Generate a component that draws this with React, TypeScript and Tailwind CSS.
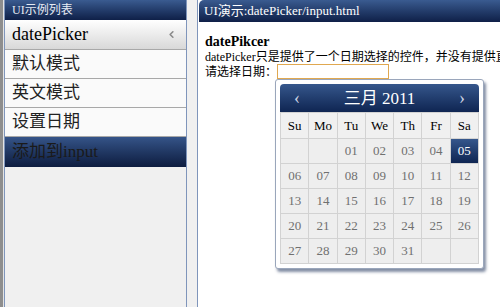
import React from "react"
import { ChevronLeft } from "lucide-react"

const serif = { fontFamily: '"Liberation Serif", "Noto Sans CJK SC", serif' }

const items = ["默认模式", "英文模式", "设置日期"]
const days = ["Su", "Mo", "Tu", "We", "Th", "Fr", "Sa"]
const cells: string[] = [
    "", "", "01", "02", "03", "04", "05",
    "06", "07", "08", "09", "10", "11", "12",
    "13", "14", "15", "16", "17", "18", "19",
    "20", "21", "22", "23", "24", "25", "26",
    "27", "28", "29", "30", "31", "", "",
]

function Calendar() {
    return (
        <div className="absolute left-[76px] top-[57px] w-[209px] rounded-[3px] border border-[#9aa6bb] bg-white p-[4px] shadow-[2px_3px_3px_rgba(30,50,90,0.55)]">
            <div className="flex h-[28px] items-center justify-between rounded-t-[4px] bg-gradient-to-b from-[#36578c] to-[#0f2552] px-[14px] text-white">
                <span className="text-[18px] leading-none text-[#c9d2e2]">‹</span>
                <span className="text-[17px] leading-none">三月 2011</span>
                <span className="text-[18px] leading-none text-[#c9d2e2]">›</span>
            </div>
            <div className="grid grid-cols-7 border-l border-t border-[#d2d2d2]">
                {days.map((d) => (
                    <div key={d} className="flex h-[26px] items-center justify-center border-b border-r border-[#d2d2d2] bg-[#f0f0f0] text-[13px] text-black">
                        {d}
                    </div>
                ))}
                {cells.map((c, i) => (
                    <div
                        key={i}
                        className={
                            c === "05"
                                ? "flex h-[25px] items-center justify-center border-b border-r border-[#d2d2d2] bg-gradient-to-b from-[#36578c] to-[#0f2552] text-[13px] text-white"
                                : "flex h-[25px] items-center justify-center border-b border-r border-[#d2d2d2] bg-[#eeeeee] text-[13px] text-[#707070]"
                        }
                    >
                        {c}
                    </div>
                ))}
            </div>
        </div>
    )
}

export default function App() {
    return (
        <div className="flex h-[307px] w-[500px] overflow-hidden bg-[#f0f0f0]" style={serif}>
            <div className="w-[3px] shrink-0 bg-[#8e8e8e]" />
            <div className="w-px shrink-0 bg-[#e4e4e4]" />

            {/* left list */}
            <div className="flex w-[183px] shrink-0 flex-col border-x border-[#7f95bb] bg-[#f0f0f0]">
                <div className="flex h-[20px] items-center bg-gradient-to-b from-[#3a5b90] to-[#0f2048] pl-[7px] text-[12px] text-[#e6ebf3]">
                    UI示例列表
                </div>
                <div className="flex h-[30px] items-center justify-between border-b border-[#a8a8a8] bg-gradient-to-b from-white to-[#d8d8d8] pl-[7px] pr-[9px] text-[18px] text-black">
                    <span>datePicker</span>
                    <ChevronLeft size={11} strokeWidth={3.5} className="text-[#8a8a8a]" />
                </div>
                {items.map((t) => (
                    <div key={t} className="flex h-[29px] items-center border-b border-[#a8a8a8] bg-[#fafafa] pl-[7px] text-[17px] text-[#222]">
                        {t}
                    </div>
                ))}
                <div className="flex h-[30px] items-center bg-gradient-to-b from-[#355488] to-[#0e1d40] pl-[7px] text-[17px] text-[#1a1a1a]">
                    添加到input
                </div>
            </div>

            <div className="w-[10px] shrink-0" />

            {/* right demo panel */}
            <div className="flex min-w-0 flex-1 flex-col overflow-hidden border-l border-[#7f95bb] bg-white pl-px">
                <div className="flex h-[22px] shrink-0 items-center rounded-tl-[5px] bg-gradient-to-b from-[#3a5b90] to-[#0f2048] pl-[5px] text-[13px] text-white">
                    UI演示:datePicker/input.html
                </div>
                <div className="relative flex-1 pl-[6px] pt-[11px]">
                    <div className="whitespace-nowrap text-[14px] font-bold leading-[17px] text-black">datePikcer</div>
                    <div className="whitespace-nowrap text-[12px] leading-[14px] text-black">
                        datePicker只是提供了一个日期选择的控件，并没有提供直接
                    </div>
                    <div className="flex items-center whitespace-nowrap text-[12px] leading-[14px] text-black">
                        请选择日期：
                        <div className="h-[15px] w-[112px] border border-[#e0a850] bg-white" />
                    </div>
                    <Calendar />
                </div>
            </div>
        </div>
    )
}
